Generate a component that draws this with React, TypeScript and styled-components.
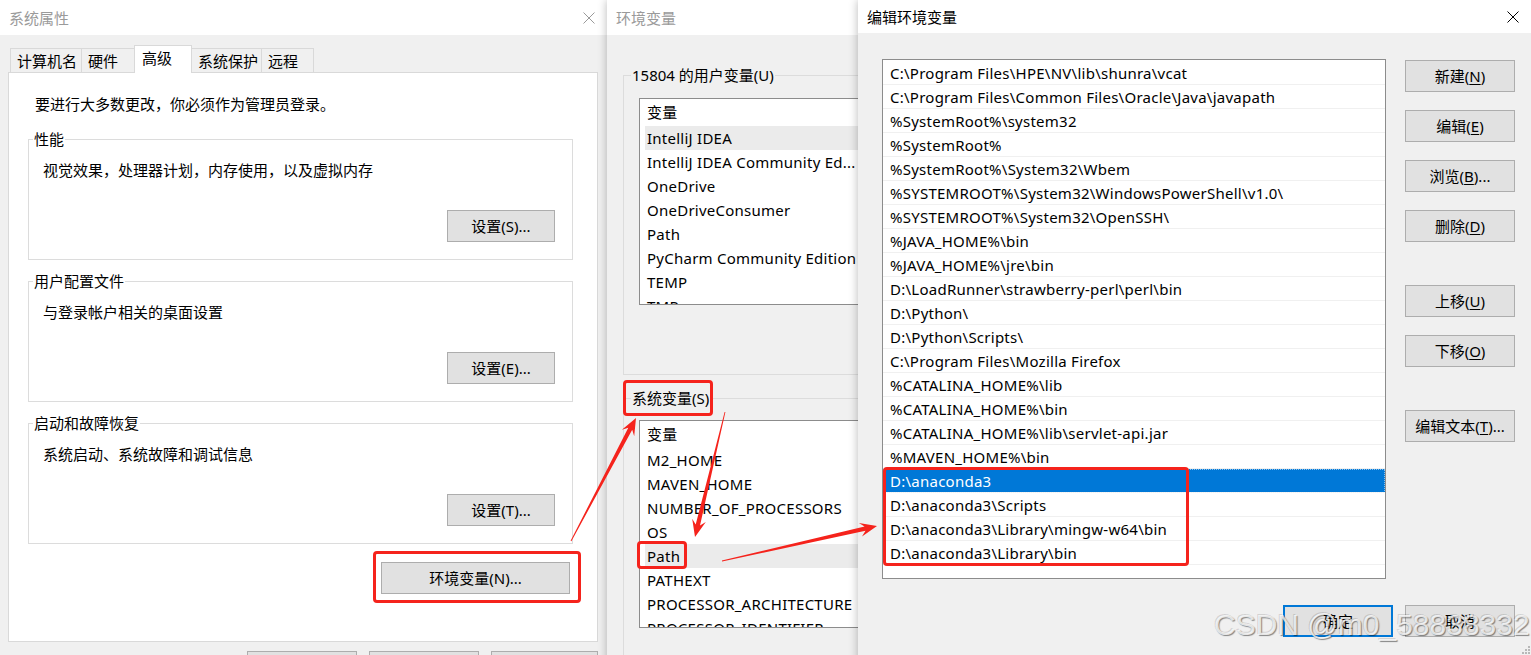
import React from 'react';
import styled, { createGlobalStyle, css } from 'styled-components';

const RED = '#f5231c';

const GlobalStyle = createGlobalStyle`
  * { box-sizing: border-box; }
  html, body { margin: 0; padding: 0; }
  body {
    background: #f0f0f0;
    font-family: "Noto Sans", "Noto Sans CJK SC", sans-serif;
    font-size: 15px;
    line-height: 20px;
    color: #000;
    overflow: hidden;
  }
`;

const Desktop = styled.div`
  position: relative;
  width: 1531px;
  height: 655px;
  overflow: hidden;
`;

const Window = styled.section<{ $left: number; $width: number; $z: number }>`
  position: absolute;
  top: 0;
  left: ${(p) => p.$left}px;
  width: ${(p) => p.$width}px;
  height: 700px;
  z-index: ${(p) => p.$z};
  display: flex;
  flex-direction: column;
  background: #f0f0f0;
  box-shadow: 0 0 9px rgba(0, 0, 0, 0.28);
  overflow: hidden;
`;

const TitleBar = styled.header<{ $active?: boolean; $height: number }>`
  flex: none;
  height: ${(p) => p.$height}px;
  display: flex;
  align-items: center;
  justify-content: space-between;
  padding: 0 12px 0 9px;
  background: #fff;
  color: ${(p) => (p.$active ? '#000' : '#9a9a9a')};
  white-space: nowrap;
`;

const CloseIcon = () => (
  <svg width="12" height="12" viewBox="0 0 12 12">
    <path d="M0.5 0.5 L11.5 11.5 M11.5 0.5 L0.5 11.5" stroke="currentColor" strokeWidth="1" fill="none" />
  </svg>
);

const Btn = styled.button<{ $w?: number; $default?: boolean; $mt?: number }>`
  flex: none;
  width: ${(p) => p.$w ?? 110}px;
  height: 32px;
  margin: ${(p) => p.$mt ?? 0}px 0 0;
  padding: 0;
  background: #e1e1e1;
  border: 1px solid #adadad;
  font: inherit;
  color: #000;
  white-space: nowrap;
  ${(p) =>
    p.$default &&
    css`
      border: 2px solid #0078d7;
    `}
  u { text-decoration-thickness: 1px; text-underline-offset: 2px; }
`;

// red annotation frame drawn around a piece of content
const Mark = styled.span<{ $t: number; $r: number; $b: number; $l: number; $block?: boolean }>`
  position: relative;
  display: ${(p) => (p.$block ? 'block' : 'inline-flex')};
  &::after {
    content: '';
    position: absolute;
    top: ${(p) => -p.$t}px;
    right: ${(p) => -p.$r}px;
    bottom: ${(p) => -p.$b}px;
    left: ${(p) => -p.$l}px;
    border: 3px solid ${RED};
    border-radius: 4px;
    pointer-events: none;
    z-index: 2;
  }
`;

/* ---------- 系统属性 ---------- */

const PropsBody = styled.div`
  flex: 1;
  display: flex;
  flex-direction: column;
  padding: 10px 9px 0 8px;
`;

const TabStrip = styled.div`
  display: flex;
  align-items: flex-end;
  height: 27px;
  padding-left: 3px;
`;

const Tab = styled.div<{ $w: number; $selected?: boolean }>`
  width: ${(p) => p.$w}px;
  height: 24px;
  margin-left: -1px;
  padding-left: 6px;
  display: flex;
  align-items: center;
  border: 1px solid #d9d9d9;
  border-bottom: none;
  background: #f0f0f0;
  ${(p) =>
    p.$selected &&
    css`
      position: relative;
      z-index: 1;
      height: 28px;
      margin-bottom: -1px;
      padding-left: 7px;
      padding-bottom: 3px;
      background: #fff;
    `}
`;

const TabPanel = styled.div`
  height: 570px;
  display: flex;
  flex-direction: column;
  padding: 21px 24px 0 19px;
  background: #fff;
  border: 1px solid #d9d9d9;
`;

const Notice = styled.p`
  margin: 0 0 15px 7px;
`;

const Group = styled.fieldset<{ $mt?: number }>`
  min-width: 0;
  margin: ${(p) => p.$mt ?? 0}px 0 0;
  padding: 11px 17px 17px 4px;
  border: 1px solid #dcdcdc;
`;

const Legend = styled.legend`
  padding: 0 1px;
  line-height: 20px;
`;

const GroupText = styled.div`
  margin-left: 10px;
`;

const GroupActions = styled.div`
  display: flex;
  justify-content: flex-end;
  margin-top: 30px;
`;

const EnvButtonRow = styled.div`
  display: flex;
  justify-content: flex-end;
  margin: 18px 3px 0 0;
`;

const DialogFooter = styled.div`
  display: flex;
  justify-content: flex-end;
  gap: 12px;
  margin-top: 9px;
`;

/* ---------- 环境变量 ---------- */

const EnvBody = styled.div`
  padding: 30px 0 0 16px;
`;

const EnvGroup = styled.fieldset<{ $mt?: number; $pt: number; $pb: number }>`
  width: 620px;
  min-width: 0;
  margin: ${(p) => p.$mt ?? 0}px 0 0;
  padding: ${(p) => p.$pt}px 0 ${(p) => p.$pb}px 7px;
  border: 1px solid #dcdcdc;
`;

const VarList = styled.div<{ $h: number }>`
  width: 560px;
  height: ${(p) => p.$h}px;
  margin-left: 8px;
  background: #fff;
  border: 1px solid #8c8c8c;
`;

const VarRow = styled.div<{ $head?: boolean; $hl?: boolean; $clip?: number }>`
  height: ${(p) => p.$clip ?? (p.$head ? 27 : 24)}px;
  line-height: ${(p) => (p.$head ? 27 : 24)}px;
  margin-left: 5px;
  padding-left: 2px;
  white-space: nowrap;
  letter-spacing: 0.25px;
  background: ${(p) => (p.$hl ? '#ebebeb' : 'transparent')};
  overflow: ${(p) => (p.$clip ? 'hidden' : 'visible')};
`;

/* ---------- 编辑环境变量 ---------- */

const EditBody = styled.div`
  display: grid;
  grid-template-columns: 504px 110px;
  column-gap: 19px;
  row-gap: 26px;
  padding: 26px 0 0 24px;
`;

const PathList = styled.div`
  height: 520px;
  padding-top: 1px;
  background: #fff;
  border: 1px solid #8c8c8c;
`;

const PathRow = styled.div<{ $selected?: boolean }>`
  height: 24px;
  line-height: 24px;
  padding-left: 7px;
  white-space: nowrap;
  letter-spacing: 0.25px;
  border-bottom: 1px solid #f0f0f0;
  ${(p) =>
    p.$selected &&
    css`
      background: #0078d7;
      color: #fff;
      outline: 1px dotted rgba(255, 255, 255, 0.55);
      outline-offset: -1px;
    `}
`;

const SideButtons = styled.div`
  display: flex;
  flex-direction: column;
  gap: 18px;
  padding-top: 1px;
`;

const EditFooter = styled.div`
  grid-column: 1 / -1;
  display: flex;
  justify-content: flex-end;
  gap: 12px;
`;

const Watermark = styled.div`
  position: absolute;
  left: 1214px;
  top: 608px;
  z-index: 11;
  font-family: "Liberation Sans", Arial, sans-serif;
  font-size: 30px;
  line-height: 34px;
  white-space: nowrap;
  color: rgba(255, 255, 255, 0.78);
  text-shadow: 1px 1px 1px rgba(0, 0, 0, 0.45), -1px -1px 0 rgba(0, 0, 0, 0.12);
  pointer-events: none;
`;

const Grip = styled.svg`
  position: absolute;
  left: 1522px;
  top: 646px;
  z-index: 5;
`;

const Annotations = styled.svg`
  position: absolute;
  left: 0;
  top: 0;
  z-index: 10;
  pointer-events: none;
`;

function arrowPoints(x1: number, y1: number, x2: number, y2: number) {
  const dx = x2 - x1;
  const dy = y2 - y1;
  const len = Math.hypot(dx, dy);
  const ux = dx / len;
  const uy = dy / len;
  const nx = -uy;
  const ny = ux;
  const head = 17;
  const barb = 7;
  const neck = 2.2;
  const tail = 0.4;
  const bx = x2 - ux * head;
  const by = y2 - uy * head;
  const kx = x2 - ux * head * 0.72;
  const ky = y2 - uy * head * 0.72;
  const pts = [
    [x1 + nx * tail, y1 + ny * tail],
    [kx + nx * neck, ky + ny * neck],
    [bx + nx * barb, by + ny * barb],
    [x2, y2],
    [bx - nx * barb, by - ny * barb],
    [kx - nx * neck, ky - ny * neck],
    [x1 - nx * tail, y1 - ny * tail],
  ];
  return pts.map(([x, y]) => `${x.toFixed(1)},${y.toFixed(1)}`).join(' ');
}

const arrows = [
  { from: [571, 541], to: [636, 418] },
  { from: [725, 412], to: [695, 537] },
  { from: [722, 561], to: [877, 526] },
];

const userVars = [
  'IntelliJ IDEA',
  'IntelliJ IDEA Community Ed...',
  'OneDrive',
  'OneDriveConsumer',
  'Path',
  'PyCharm Community Edition',
  'TEMP',
];

const systemVars = ['M2_HOME', 'MAVEN_HOME', 'NUMBER_OF_PROCESSORS', 'OS', 'Path', 'PATHEXT', 'PROCESSOR_ARCHITECTURE'];

const paths = [
  'C:\\Program Files\\HPE\\NV\\lib\\shunra\\vcat',
  'C:\\Program Files\\Common Files\\Oracle\\Java\\javapath',
  '%SystemRoot%\\system32',
  '%SystemRoot%',
  '%SystemRoot%\\System32\\Wbem',
  '%SYSTEMROOT%\\System32\\WindowsPowerShell\\v1.0\\',
  '%SYSTEMROOT%\\System32\\OpenSSH\\',
  '%JAVA_HOME%\\bin',
  '%JAVA_HOME%\\jre\\bin',
  'D:\\LoadRunner\\strawberry-perl\\perl\\bin',
  'D:\\Python\\',
  'D:\\Python\\Scripts\\',
  'C:\\Program Files\\Mozilla Firefox',
  '%CATALINA_HOME%\\lib',
  '%CATALINA_HOME%\\bin',
  '%CATALINA_HOME%\\lib\\servlet-api.jar',
  '%MAVEN_HOME%\\bin',
];

const anacondaPaths = [
  'D:\\anaconda3',
  'D:\\anaconda3\\Scripts',
  'D:\\anaconda3\\Library\\mingw-w64\\bin',
  'D:\\anaconda3\\Library\\bin',
];

const groups = [
  { title: '性能', text: '视觉效果，处理器计划，内存使用，以及虚拟内存', button: '设置(S)...' },
  { title: '用户配置文件', text: '与登录帐户相关的桌面设置', button: '设置(E)...' },
  { title: '启动和故障恢复', text: '系统启动、系统故障和调试信息', button: '设置(T)...' },
];

function SystemProperties() {
  return (
    <Window $left={0} $width={607} $z={1}>
      <TitleBar $height={35}>
        <span>系统属性</span>
        <CloseIcon />
      </TitleBar>
      <PropsBody>
        <TabStrip>
          <Tab $w={72}>计算机名</Tab>
          <Tab $w={54}>硬件</Tab>
          <Tab $w={58} $selected>
            高级
          </Tab>
          <Tab $w={71}>系统保护</Tab>
          <Tab $w={53}>远程</Tab>
        </TabStrip>
        <TabPanel>
          <Notice>要进行大多数更改，你必须作为管理员登录。</Notice>
          {groups.map((g, i) => (
            <Group key={g.title} $mt={i === 0 ? 0 : 11}>
              <Legend>{g.title}</Legend>
              <GroupText>{g.text}</GroupText>
              <GroupActions>
                <Btn $w={108}>{g.button}</Btn>
              </GroupActions>
            </Group>
          ))}
          <EnvButtonRow>
            <Mark $t={11} $r={11} $b={9} $l={8}>
              <Btn $w={189}>环境变量(N)...</Btn>
            </Mark>
          </EnvButtonRow>
        </TabPanel>
        <DialogFooter>
          <Btn>确定</Btn>
          <Btn>取消</Btn>
          <Btn $w={107}>应用(A)</Btn>
        </DialogFooter>
      </PropsBody>
    </Window>
  );
}

function EnvironmentVariables() {
  return (
    <Window $left={607} $width={660} $z={2}>
      <TitleBar $height={35}>
        <span>环境变量</span>
      </TitleBar>
      <EnvBody>
        <EnvGroup $pt={13} $pb={69}>
          <Legend>15804 的用户变量(U)</Legend>
          <VarList $h={207}>
            <VarRow $head>变量</VarRow>
            {userVars.map((v, i) => (
              <VarRow key={v} $hl={i === 0}>
                {v}
              </VarRow>
            ))}
            <VarRow $clip={10}>TMP</VarRow>
          </VarList>
        </EnvGroup>
        <EnvGroup $mt={13} $pt={12} $pb={70}>
          <Legend>
            <Mark $t={8} $r={4} $b={8} $l={9}>
              系统变量(S)
            </Mark>
          </Legend>
          <VarList $h={208}>
            <VarRow $head>变量</VarRow>
            {systemVars.map((v) => (
              <VarRow key={v} $hl={v === 'Path'}>
                {v === 'Path' ? (
                  <Mark $t={3} $r={7} $b={1} $l={10}>
                    Path
                  </Mark>
                ) : (
                  v
                )}
              </VarRow>
            ))}
            <VarRow $clip={11}>PROCESSOR_IDENTIFIER</VarRow>
          </VarList>
        </EnvGroup>
      </EnvBody>
    </Window>
  );
}

function EditVariable() {
  return (
    <Window $left={858} $width={673} $z={3}>
      <TitleBar $height={33} $active>
        <span>编辑环境变量</span>
        <CloseIcon />
      </TitleBar>
      <EditBody>
        <PathList>
          {paths.map((p) => (
            <PathRow key={p}>{p}</PathRow>
          ))}
          <Mark $block $t={2} $r={-196} $b={1} $l={0}>
            {anacondaPaths.map((p, i) => (
              <PathRow key={p} $selected={i === 0}>
                {p}
              </PathRow>
            ))}
          </Mark>
        </PathList>
        <SideButtons>
          <Btn>
            新建(<u>N</u>)
          </Btn>
          <Btn>
            编辑(<u>E</u>)
          </Btn>
          <Btn>
            浏览(<u>B</u>)...
          </Btn>
          <Btn>
            删除(<u>D</u>)
          </Btn>
          <Btn $mt={25}>
            上移(<u>U</u>)
          </Btn>
          <Btn>
            下移(<u>O</u>)
          </Btn>
          <Btn $mt={25}>
            编辑文本(<u>T</u>)...
          </Btn>
        </SideButtons>
        <EditFooter>
          <Btn $default>确定</Btn>
          <Btn>取消</Btn>
        </EditFooter>
      </EditBody>
    </Window>
  );
}

export default function App() {
  return (
    <>
      <GlobalStyle />
      <Desktop>
        <SystemProperties />
        <EnvironmentVariables />
        <EditVariable />
        <Annotations width={1531} height={655} viewBox="0 0 1531 655">
          {arrows.map((a, i) => (
            <polygon key={i} points={arrowPoints(a.from[0], a.from[1], a.to[0], a.to[1])} fill={RED} />
          ))}
        </Annotations>
        <Grip width="8" height="8" viewBox="0 0 8 8">
          {[
            [6, 1],
            [3, 4],
            [6, 4],
            [0, 7],
            [3, 7],
            [6, 7],
          ].map(([x, y]) => (
            <rect key={`${x}-${y}`} x={x} y={y - 1} width="2" height="2" fill="#b8b8b8" />
          ))}
        </Grip>
        <Watermark>CSDN @m0_58838332</Watermark>
      </Desktop>
    </>
  );
}
